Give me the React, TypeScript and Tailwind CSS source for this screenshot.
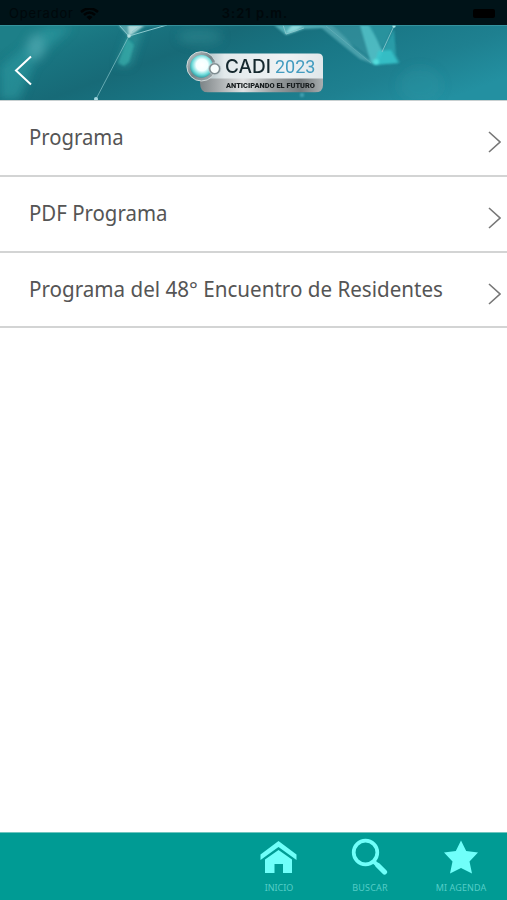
import React from "react";

const rows = [
  { label: "Programa", height: "h-[76px]", scale: "scale-x-[0.965]" },
  { label: "PDF Programa", height: "h-[76px]", scale: "scale-x-[0.972]" },
  { label: "Programa del 48° Encuentro de Residentes", height: "h-[75px]", scale: "scale-x-[0.981]" },
];

function HeaderArt() {
  return (
    <svg className="absolute inset-0 h-full w-full" viewBox="0 0 507 75" preserveAspectRatio="none" aria-hidden="true">
      <defs>
        <linearGradient id="sea" x1="0" x2="1" y1="0.3" y2="0.7">
          <stop offset="0" stopColor="#1d7f88" />
          <stop offset="0.14" stopColor="#197480" />
          <stop offset="0.32" stopColor="#176a77" />
          <stop offset="0.55" stopColor="#197786" />
          <stop offset="0.78" stopColor="#1e8090" />
          <stop offset="1" stopColor="#2390a1" />
        </linearGradient>
        <filter id="soft" x="-50%" y="-50%" width="200%" height="200%"><feGaussianBlur stdDeviation="5" /></filter>
        <filter id="fine" x="-20%" y="-20%" width="140%" height="140%"><feGaussianBlur stdDeviation="1" /></filter>
      </defs>
      <rect width="507" height="75" fill="url(#sea)" />
      <g filter="url(#soft)">
        <path d="M0 75V42L22 24 46 2H72L36 34 19 75Z" fill="#2c9ca3" opacity=".6" />
        <ellipse cx="36" cy="22" rx="9" ry="13" fill="#58acb3" opacity=".6" />
        <path d="M129 10L143 0 130 40 118 41Z" fill="#36a9a8" opacity=".6" />
        <ellipse cx="200" cy="12" rx="22" ry="8" fill="#35939c" opacity=".4" />
        <ellipse cx="420" cy="60" rx="22" ry="18" fill="#359aa7" opacity=".25" />
      </g>
      <g filter="url(#fine)">
        <path d="M127 13L134 20 129 37 124 41 118 38Z" fill="#38ada9" opacity=".7" />
        <path d="M118 0L128 11 136 7 145 1 166 0Z" fill="#70b9bd" opacity=".65" />
        <path d="M128 0L129 12 144 0Z" fill="#bce0e2" opacity=".85" />
        <path d="M274 0L286 10 304 4 322 3 330 0Z" fill="#65c1c8" opacity=".75" />
        <path d="M285 9L292 0H304L296 6Z" fill="#8bd8db" />
        <path d="M318 0L345 22 360 34 376 40 354 23 345 12 332 0Z" fill="#58aeb7" opacity=".75" />
        <path d="M332 0H362L371 34 350 18Z" fill="#3d98a3" opacity=".6" />
        <path d="M360 0H370L383 27 378 40 371 38Z" fill="#55c4ca" opacity=".85" />
        <path d="M368 0H394L383 24Z" fill="#2f9ca7" opacity=".7" />
        <path d="M383 25L394 4 396 30 400 38 374 40Z" fill="#2eaab3" opacity=".7" />
        <path d="M378 26L391 25 398 38 374 40Z" fill="#3ac8cf" opacity=".75" />
        <circle cx="376" cy="37" r="3" fill="#53dedd" />
        <circle cx="302" cy="70" r="2" fill="#4ba6b8" />
      </g>
      <g fill="none" stroke="#8fcbd0" strokeWidth="1">
        <path d="M129 11L96 74" opacity=".65" />
        <path d="M119 0L129 11 167 0M132 7L140 1" />
        <path d="M394 1L382 27M283 0L286 9 304 3" opacity=".8" />
        <path d="M326 1L371 38" opacity=".3" />
      </g>
      <circle cx="129" cy="11" r="1.8" fill="#b6e0e1" />
      <circle cx="96" cy="74" r="2" fill="#a4d7df" />
      <circle cx="394" cy="1" r="1.7" fill="#a0e3e4" />
      <path d="M0 .5H507" stroke="#419ca5" opacity=".7" />
    </svg>
  );
}

function Logo() {
  return (
    <svg className="relative mt-[19px] ml-[3px] h-[44px] w-[138px]" viewBox="186 50 138 44" role="img" aria-label="CADI 2023">
      <defs>
        <linearGradient id="plate" x2="1"><stop stopColor="#9bb2b7" /><stop offset=".2" stopColor="#e3eaec" /><stop offset=".7" stopColor="#eef2f4" /><stop offset="1" stopColor="#e0e7ea" /></linearGradient>
        <linearGradient id="steel" x2="1"><stop stopColor="#7c8487" /><stop offset=".1" stopColor="#9a9fa1" /><stop offset=".35" stopColor="#e0e2e3" /><stop offset=".6" stopColor="#999ea0" /><stop offset=".82" stopColor="#747a7d" /><stop offset="1" stopColor="#a9afb1" /></linearGradient>
        <radialGradient id="orb" cx=".52" cy=".45"><stop stopColor="white" /><stop offset=".45" stopColor="#f2ffff" /><stop offset=".75" stopColor="#72dcdb" /><stop offset="1" stopColor="#2b9ba0" /></radialGradient>
        <linearGradient id="ring" x1="0" y1="0" x2="1" y2="1"><stop stopColor="#b8c1c3" /><stop offset=".5" stopColor="#748489" /><stop offset="1" stopColor="#a3adb0" /></linearGradient>
        <clipPath id="badge"><path d="M204 53.5H318Q323 53.5 323 58.5V85Q323 92.5 315 92.5H208Q200 92.5 200 83V53.5Z" /></clipPath>
      </defs>
      <g clipPath="url(#badge)">
        <rect x="200" y="53" width="123" height="26" fill="url(#plate)" />
        <rect x="200" y="78.5" width="123" height="14" fill="url(#steel)" />
      </g>
      <circle cx="201.5" cy="66.3" r="13" fill="url(#orb)" stroke="url(#ring)" strokeWidth="3.2" />
      <circle cx="201.5" cy="66.3" r="14.7" fill="none" stroke="#d3dbdc" strokeWidth="1" />
      <circle cx="214.7" cy="68.8" r="5.1" fill="#f7fcfc" stroke="#7e8c90" strokeWidth="1.8" />
      <circle cx="214.7" cy="68.8" r="6.1" fill="none" stroke="#c4cfd2" strokeWidth=".7" />
      <text x="225" y="73" fontFamily="Inter, sans-serif" fontSize="19" fontWeight="500" fill="#15282e" textLength="46" lengthAdjust="spacingAndGlyphs">CADI</text>
      <text x="275" y="72.5" fontFamily="Roboto, sans-serif" fontSize="19" fill="#439cc0" textLength="40.5" lengthAdjust="spacingAndGlyphs">2023</text>
      <text x="226" y="88" fontFamily="Roboto, sans-serif" fontSize="7.5" fontWeight="900" fill="#171c1e" textLength="89" lengthAdjust="spacingAndGlyphs">ANTICIPANDO EL FUTURO</text>
    </svg>
  );
}

export default function App() {
  return (
    <div className="flex h-[900px] w-[507px] flex-col overflow-hidden bg-white font-['Noto_Sans',sans-serif]">
      <div className="grid h-[25px] shrink-0 grid-cols-3 items-center bg-[#001318] text-[13px] text-[#00080b]">
        <div className="flex items-center gap-[6px] pt-[3px] pl-[9px] font-['Inter',sans-serif]">
          <span className="w-[65px] tracking-[0.8px]">Operador</span>
          <svg className="h-[13px] w-[19px] text-[#000304]" viewBox="0 0 19 13" fill="none" stroke="currentColor" strokeWidth="2.6">
            <path d="M1 4Q9.5-3 18 4M4 7Q9.5 2 15 7" /><path d="M6.5 9Q9.5 6 12.5 9L9.5 12Z" fill="currentColor" stroke="none" />
          </svg>
        </div>
        <span className="pt-[3px] pl-[3px] text-center font-['Inter',sans-serif] text-[13px] font-semibold tracking-[1px]">3:21 p.m.</span>
        <div className="flex justify-end pt-px pr-[12px]"><span className="h-[9px] w-[22px] rounded-[2px] bg-black" /></div>
      </div>
      <header className="relative flex h-[75px] shrink-0 items-center justify-center">
        <HeaderArt />
        <Logo />
        <button className="absolute top-[30px] left-[14px] h-[31px] w-[18px]" aria-label="Atrás">
          <svg className="h-full w-full" viewBox="0 0 18 31" fill="none" stroke="white" strokeWidth="2"><path d="M17 1.5L2 15.5 17 29.5" /></svg>
        </button>
      </header>
      <main className="min-h-0 flex-1 border-t border-[#c8d0d1]">
        {rows.map((row) => (
          <div key={row.label} className={`flex ${row.height} items-center justify-between border-b-2 border-[#d3d4d4] pr-[6px] pl-[29px]`}>
            <span className={`origin-left -mt-[2px] text-[21px] leading-[30px] whitespace-nowrap text-[#555] ${row.scale}`}>{row.label}</span>
            <svg className="mt-[8px] h-[22px] w-[13px] shrink-0" viewBox="0 0 13 22" fill="none" stroke="#777" strokeWidth="1.6"><path d="M1 1L12 11 1 21" /></svg>
          </div>
        ))}
      </main>
      <nav className="flex h-[68px] shrink-0 justify-end border-t border-[#70c5bf] bg-[#009b94] text-[#70fffa]">
        <div className="flex w-[91px] flex-col items-center">
          <svg className="mt-[6px] h-[36px] w-[38px]" viewBox="0 0 38 36" fill="currentColor">
            <path d="M18.5 2L36.5 15.5V21L18.5 8 .5 21V15.5Z" /><path d="M18.5 11L32 20.5V34H23V25H14.5V34H5V20.5Z" />
          </svg>
          <span className="mt-[7px] ml-px text-[9px] leading-[12px] text-[#54cdc7]">INICIO</span>
        </div>
        <div className="flex w-[91px] flex-col items-center">
          <svg className="mt-[5px] h-[37px] w-[38px]" viewBox="0 0 38 37" fill="none" stroke="currentColor">
            <circle cx="14.5" cy="14.5" r="11.8" strokeWidth="3.7" /><path d="M22 23L27 27.5" strokeWidth="4" /><path d="M27 27.5L33.5 34" strokeWidth="5.2" strokeLinecap="round" />
          </svg>
          <span className="mt-[7px] ml-px text-[9px] leading-[12px] tracking-[0.15px] text-[#54cdc7]">BUSCAR</span>
        </div>
        <div className="flex w-[92px] flex-col items-center">
          <svg className="mt-[6px] h-[36px] w-[36px]" viewBox="0 0 36 36" fill="currentColor"><path d="M18 1.5L23.2 12 35 13.5 26.5 22.5 29 34.5 18 29 7 34.5 9.5 22.5 1 13.5 12.8 12Z" /></svg>
          <span className="mt-[7px] text-[9px] leading-[12px] tracking-[0.1px] text-[#54cdc7]">MI AGENDA</span>
        </div>
      </nav>
    </div>
  );
}
